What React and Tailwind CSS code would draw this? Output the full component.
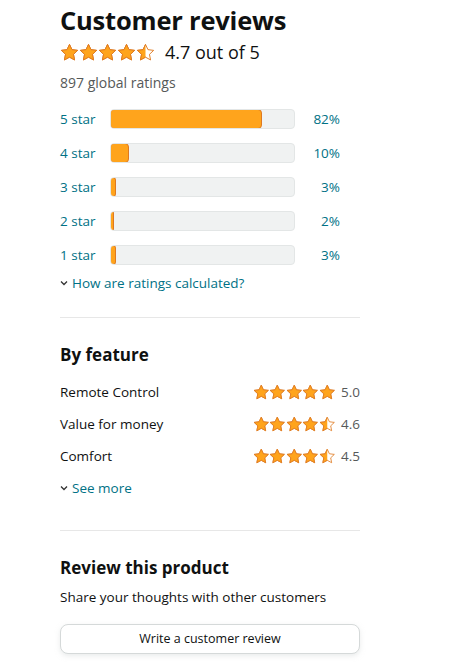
import React from "react";

const STAR = "M12 1.8l3.1 6.6 7.2.9-5.3 5 1.4 7.1L12 17.9l-6.4 3.5 1.4-7.1-5.3-5 7.2-.9z";

function Star({ fill = 1, size = 19, id }) {
  return (
    <svg width={size} height={size} viewBox="0 0 24 24" className="shrink-0">
      <defs>
        <clipPath id={id}>
          <rect x="0" y="0" width={24 * fill} height="24" />
        </clipPath>
      </defs>
      <path d={STAR} fill="#fff" stroke="#de7921" strokeWidth="1.2" strokeLinejoin="round" />
      <path d={STAR} fill="#ffa41c" stroke="#de7921" strokeWidth="1.2" strokeLinejoin="round" clipPath={`url(#${id})`} />
    </svg>
  );
}

function Stars({ value, size, prefix }) {
  return (
    <div className="flex items-center">
      {[0, 1, 2, 3, 4].map((i) => {
        const f = Math.max(0, Math.min(1, value - i));
        return <Star key={i} size={size} fill={f} id={`${prefix}${i}`} />;
      })}
    </div>
  );
}

const bars = [
  ["5 star", 82],
  ["4 star", 10],
  ["3 star", 3],
  ["2 star", 2],
  ["1 star", 3],
];

const features = [
  ["Remote Control", 5, "5.0"],
  ["Value for money", 4.5, "4.6"],
  ["Comfort", 4.5, "4.5"],
];

function Chevron() {
  return (
    <svg width="8" height="6" viewBox="0 0 8 6" className="mr-[4px]">
      <path d="M1 1.5l3 3 3-3" fill="none" stroke="#333" strokeWidth="1.3" />
    </svg>
  );
}

export default function App() {
  return (
    <div className="w-[453px] h-[667px] bg-white overflow-hidden" style={{ fontFamily: '"Open Sans", Arial, sans-serif' }}>
      <div className="ml-[60px] w-[300px] pt-[5px]">
        <h2 className="text-[25.5px] font-bold text-[#0f1111] leading-[30px] tracking-[-0.2px]">Customer reviews</h2>
        <div className="flex items-center mt-[4px] h-[26px]">
          <Stars value={4.5} size={19} prefix="h" />
          <span className="ml-[10px] text-[18px] text-[#0f1111]">4.7 out of 5</span>
        </div>
        <div className="mt-[8px] text-[14px] text-[#565959] leading-[20px]">897 global ratings</div>
        <div className="mt-[16px] flex flex-col gap-[14px]">
          {bars.map(([label, pct]) => (
            <div key={label} className="flex items-center h-[20px]">
              <span className="w-[50px] text-[13.5px] text-[#007185]">{label}</span>
              <div className="w-[185px] h-[20px] rounded-[4px] bg-[#f0f2f2] border border-[#e3e6e6] overflow-hidden relative">
                <div
                  className="absolute left-[-1px] top-[-1px] bottom-[-1px] rounded-[4px] bg-[#ffa41c] border border-[#de7921]"
                  style={{ width: `${(pct / 100) * 185}px` }}
                />
              </div>
              <span className="w-[45px] text-right text-[13.5px] text-[#007185]">{pct}%</span>
            </div>
          ))}
        </div>
        <div className="mt-[8px] flex items-center text-[13.5px] text-[#007185] h-[20px]">
          <Chevron />
          How are ratings calculated?
        </div>
        <div className="mt-[24px] border-t border-[#e7e7e7]" />
        <h3 className="mt-[25px] text-[17px] font-bold text-[#0f1111] leading-[24px]">By feature</h3>
        <div className="mt-[15px] flex flex-col gap-[12px]">
          {features.map(([name, v, label], idx) => (
            <div key={name} className="flex items-center justify-between h-[20px]">
              <span className="text-[13.5px] text-[#0f1111]">{name}</span>
              <div className="flex items-center">
                <Stars value={v} size={16.5} prefix={`f${idx}`} />
                <span className="ml-[6px] text-[13.5px] text-[#565959]">{label}</span>
              </div>
            </div>
          ))}
        </div>
        <div className="mt-[12px] flex items-center text-[13.5px] text-[#007185] h-[20px]">
          <Chevron />
          See more
        </div>
        <div className="mt-[32px] border-t border-[#e7e7e7]" />
        <h3 className="mt-[25px] text-[17px] font-bold text-[#0f1111] leading-[24px]">Review this product</h3>
        <div className="mt-[7px] text-[13.5px] text-[#0f1111] leading-[20px]">Share your thoughts with other customers</div>
        <button className="mt-[17px] w-[300px] h-[30px] rounded-[8px] border border-[#d5d9d9] bg-white shadow-[0_2px_5px_0_rgba(213,217,217,0.5)] text-[12.5px] text-[#0f1111]">
          Write a customer review
        </button>
      </div>
    </div>
  );
}
